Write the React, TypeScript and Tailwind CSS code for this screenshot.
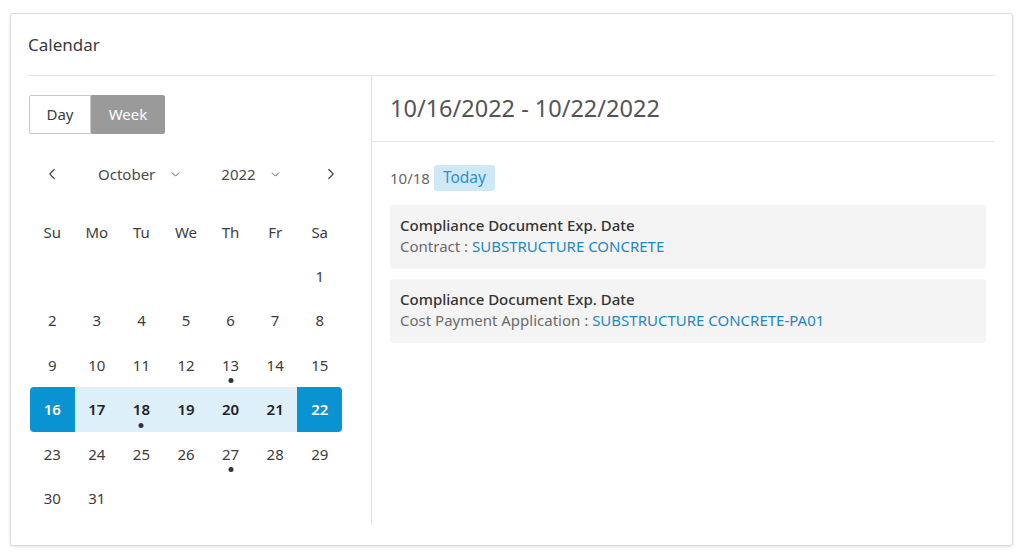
import React from 'react';
import { ChevronLeft, ChevronRight, ChevronDown } from 'lucide-react';

const weekdays = ['Su', 'Mo', 'Tu', 'We', 'Th', 'Fr', 'Sa'];

// October 2022 starts on a Saturday
const days: (number | null)[] = [
  null, null, null, null, null, null,
  ...Array.from({ length: 31 }, (_, i) => i + 1),
];

const dotted = [13, 18, 27];
const weekStart = 16;
const weekEnd = 22;

const events = [
  { title: 'Compliance Document Exp. Date', label: 'Contract', link: 'SUBSTRUCTURE CONCRETE' },
  {
    title: 'Compliance Document Exp. Date',
    label: 'Cost Payment Application',
    link: 'SUBSTRUCTURE CONCRETE-PA01',
  },
];

const DayCell: React.FC<{ day: number | null }> = ({ day }) => {
  if (day === null) return <div className="h-[44.4px]" />;
  const inWeek = day >= weekStart && day <= weekEnd;
  const isEdge = day === weekStart || day === weekEnd;

  let cls = 'relative h-[44.4px] flex items-center justify-center text-[15px]';
  if (isEdge) cls += ' bg-[#0a93d3] text-white font-semibold';
  else if (inWeek) cls += ' bg-[#ddeff9] text-[#222] font-semibold';
  else cls += ' text-[#3c3c3c]';
  if (day === weekStart) cls += ' rounded-l-[4px]';
  if (day === weekEnd) cls += ' rounded-r-[4px]';

  return (
    <div className={cls}>
      <span>{day}</span>
      {dotted.includes(day) && (
        <span className="absolute bottom-[4px] left-1/2 -translate-x-1/2 w-[5px] h-[5px] rounded-full bg-[#333]" />
      )}
    </div>
  );
};

export default function App() {
  return (
    <div
      className="w-[1024px] h-[557px] bg-white pt-[13px] pl-[10px] pr-[11px] pb-[11px]"
      style={{ fontFamily: '"Noto Sans", "Open Sans", sans-serif' }}
    >
      <div className="h-full border border-[#dcdcdc] rounded-[3px] shadow-[0_1px_3px_rgba(0,0,0,0.12)] px-[17px] flex flex-col">
        <div className="h-[62px] flex items-center border-b border-[#e3e3e3] text-[17px] text-[#3a3a3a] shrink-0">
          Calendar
        </div>

        <div className="flex h-[449px]">
          {/* left: mini calendar */}
          <div className="w-[344px] border-r border-[#e3e3e3] pt-[19px]">
            <div className="flex h-[39px] w-[136px] ml-[1px] text-[15px]">
              <div className="w-[62px] flex items-center justify-center border border-[#c8c8c8] rounded-l-[2px] text-[#3c3c3c]">
                Day
              </div>
              <div className="flex-1 flex items-center justify-center bg-[#9a9a9a] border border-[#9a9a9a] rounded-r-[2px] text-white">
                Week
              </div>
            </div>

            <div className="flex items-center h-[40px] mt-[20px] ml-[2px] w-[312px] text-[15px] text-[#4a4a4a]">
              <div className="w-[44px] flex justify-center">
                <ChevronLeft size={18} strokeWidth={1.6} />
              </div>
              <div className="flex items-center ml-[24px]">
                <span>October</span>
                <ChevronDown size={13} strokeWidth={1.6} className="ml-[14px]" />
              </div>
              <div className="flex items-center ml-[39px]">
                <span>2022</span>
                <ChevronDown size={13} strokeWidth={1.6} className="ml-[13px]" />
              </div>
              <div className="ml-auto w-[22px] flex justify-center">
                <ChevronRight size={18} strokeWidth={1.6} />
              </div>
            </div>

            <div className="grid grid-cols-7 w-[312px] ml-[2px] mt-[16px]">
              {weekdays.map((w) => (
                <div key={w} className="h-[44px] flex items-center justify-center text-[15px] text-[#3c3c3c]">
                  {w}
                </div>
              ))}
              {days.map((d, i) => (
                <DayCell key={i} day={d} />
              ))}
            </div>
          </div>

          {/* right: week agenda */}
          <div className="flex-1">
            <div className="h-[66px] flex items-center border-b border-[#e3e3e3] pl-[18px] text-[23.5px] text-[#555]">
              10/16/2022 - 10/22/2022
            </div>
            <div className="pl-[18px] pr-[9px] pt-[23px]">
              <div className="flex items-center gap-[4px] h-[26px]">
                <span className="text-[15px] text-[#666]">10/18</span>
                <span className="h-[26px] px-[9px] flex items-center rounded-[3px] bg-[#cfe8f6] text-[15.5px] text-[#2a93cc]">
                  Today
                </span>
              </div>
              <div className="mt-[14px] flex flex-col gap-[10px]">
                {events.map((e, i) => (
                  <div key={i} className="h-[64px] bg-[#f4f4f4] rounded-[4px] px-[10px] pt-[10px] text-[15px] leading-[21px]">
                    <div className="font-medium text-[#333]">{e.title}</div>
                    <div className="text-[#6b6b6b]">
                      {e.label} : <span className="text-[#1f87c0]">{e.link}</span>
                    </div>
                  </div>
                ))}
              </div>
            </div>
          </div>
        </div>
      </div>
    </div>
  );
}
